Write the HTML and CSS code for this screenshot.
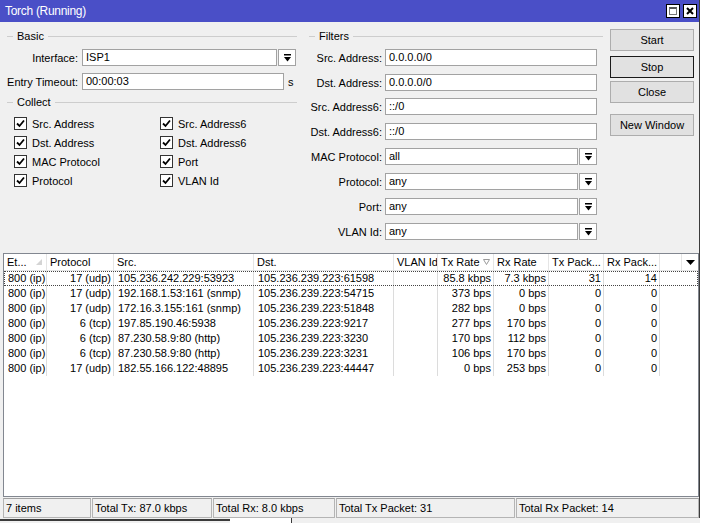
FILE: index.html
```html
<!DOCTYPE html>
<html>
<head>
<meta charset="utf-8">
<title>Torch</title>
<link rel="stylesheet" href="styles.css">
</head>
<body>
<div class="window">
  <div class="titlebar">
    <span class="title">Torch (Running)</span>
    <div class="tbtns">
      <span class="tb"><span class="maxi"></span></span>
      <span class="tb"><svg width="8" height="8" viewBox="0 0 8 8"><path d="M1 1 L7 7 M7 1 L1 7" stroke="#000" stroke-width="2"/></svg></span>
    </div>
  </div>

  <div class="top">
    <div class="col basic">
      <div class="legend"><span class="dash"></span><span class="lt">Basic</span><span class="ln"></span></div>
      <div class="frow first">
        <span class="lbl lw78">Interface:</span>
        <span class="inp w195">ISP1</span>
        <span class="dd"><svg width="7" height="8" viewBox="0 0 7 8"><rect x="0" y="0" width="7" height="1.5" fill="#000"/><polygon points="0,3 7,3 3.5,7.5" fill="#000"/></svg></span>
      </div>
      <div class="frow r2">
        <span class="lbl lw78">Entry Timeout:</span>
        <span class="inp w202">00:00:03</span>
        <span class="unit">s</span>
      </div>
      <div class="legend collect"><span class="dash"></span><span class="lt">Collect</span><span class="ln"></span></div>
      <div class="checks">
        <div class="chk"><span class="box"><svg width="11" height="11" viewBox="0 0 11 11"><polyline points="2,5.5 4.5,8 9,2.5" fill="none" stroke="#000" stroke-width="1.8"/></svg></span><span>Src. Address</span></div>
        <div class="chk"><span class="box"><svg width="11" height="11" viewBox="0 0 11 11"><polyline points="2,5.5 4.5,8 9,2.5" fill="none" stroke="#000" stroke-width="1.8"/></svg></span><span>Src. Address6</span></div>
        <div class="chk"><span class="box"><svg width="11" height="11" viewBox="0 0 11 11"><polyline points="2,5.5 4.5,8 9,2.5" fill="none" stroke="#000" stroke-width="1.8"/></svg></span><span>Dst. Address</span></div>
        <div class="chk"><span class="box"><svg width="11" height="11" viewBox="0 0 11 11"><polyline points="2,5.5 4.5,8 9,2.5" fill="none" stroke="#000" stroke-width="1.8"/></svg></span><span>Dst. Address6</span></div>
        <div class="chk"><span class="box"><svg width="11" height="11" viewBox="0 0 11 11"><polyline points="2,5.5 4.5,8 9,2.5" fill="none" stroke="#000" stroke-width="1.8"/></svg></span><span>MAC Protocol</span></div>
        <div class="chk"><span class="box"><svg width="11" height="11" viewBox="0 0 11 11"><polyline points="2,5.5 4.5,8 9,2.5" fill="none" stroke="#000" stroke-width="1.8"/></svg></span><span>Port</span></div>
        <div class="chk"><span class="box"><svg width="11" height="11" viewBox="0 0 11 11"><polyline points="2,5.5 4.5,8 9,2.5" fill="none" stroke="#000" stroke-width="1.8"/></svg></span><span>Protocol</span></div>
        <div class="chk"><span class="box"><svg width="11" height="11" viewBox="0 0 11 11"><polyline points="2,5.5 4.5,8 9,2.5" fill="none" stroke="#000" stroke-width="1.8"/></svg></span><span>VLAN Id</span></div>
      </div>
    </div>

    <div class="col filters">
      <div class="legend"><span class="dash"></span><span class="lt">Filters</span><span class="ln"></span></div>
      <div class="frow first"><span class="lbl lw76">Src. Address:</span><span class="inp w212">0.0.0.0/0</span></div>
      <div class="frow g8"><span class="lbl lw76">Dst. Address:</span><span class="inp w212">0.0.0.0/0</span></div>
      <div class="frow g7"><span class="lbl lw76">Src. Address6:</span><span class="inp w212">::/0</span></div>
      <div class="frow g8"><span class="lbl lw76">Dst. Address6:</span><span class="inp w212">::/0</span></div>
      <div class="frow g8"><span class="lbl lw76">MAC Protocol:</span><span class="inp w193">all</span><span class="dd"><svg width="7" height="8" viewBox="0 0 7 8"><rect x="0" y="0" width="7" height="1.5" fill="#000"/><polygon points="0,3 7,3 3.5,7.5" fill="#000"/></svg></span></div>
      <div class="frow g8"><span class="lbl lw76">Protocol:</span><span class="inp w193">any</span><span class="dd"><svg width="7" height="8" viewBox="0 0 7 8"><rect x="0" y="0" width="7" height="1.5" fill="#000"/><polygon points="0,3 7,3 3.5,7.5" fill="#000"/></svg></span></div>
      <div class="frow g8"><span class="lbl lw76">Port:</span><span class="inp w193">any</span><span class="dd"><svg width="7" height="8" viewBox="0 0 7 8"><rect x="0" y="0" width="7" height="1.5" fill="#000"/><polygon points="0,3 7,3 3.5,7.5" fill="#000"/></svg></span></div>
      <div class="frow g8"><span class="lbl lw76">VLAN Id:</span><span class="inp w193">any</span><span class="dd"><svg width="7" height="8" viewBox="0 0 7 8"><rect x="0" y="0" width="7" height="1.5" fill="#000"/><polygon points="0,3 7,3 3.5,7.5" fill="#000"/></svg></span></div>
    </div>

    <div class="col btns">
      <div class="btn">Start</div>
      <div class="btn stop">Stop</div>
      <div class="btn close">Close</div>
      <div class="btn nw">New Window</div>
    </div>
  </div>

  <div class="list">
    <div class="row head">
      <div class="c hc">Et...<svg class="sorti" width="6" height="6" viewBox="0 0 6 6"><polygon points="0,6 6,6 6,0" fill="#d4d4d4"/></svg></div>
      <div class="c hc">Protocol</div>
      <div class="c hc">Src.</div>
      <div class="c hc">Dst.</div>
      <div class="c hc">VLAN Id</div>
      <div class="c hc">Tx Rate<svg class="sorti2" width="7" height="6" viewBox="0 0 7 6"><polygon points="0.5,0.5 6.5,0.5 3.5,5.5" fill="none" stroke="#9a9a9a" stroke-width="1"/></svg></div>
      <div class="c hc">Rx Rate</div>
      <div class="c hc">Tx Pack...</div>
      <div class="c hc">Rx Pack...</div>
      <div class="c hc sp"></div>
      <div class="c hc last"><svg width="9" height="5" viewBox="0 0 9 5"><polygon points="0,0 9,0 4.5,5" fill="#000"/></svg></div>
    </div>
    <div class="row data focus">
      <div class="c l">800 (ip)</div><div class="c r">17 (udp)</div><div class="c l">105.236.242.229:53923</div><div class="c l">105.236.239.223:61598</div><div class="c"></div><div class="c r">85.8 kbps</div><div class="c r">7.3 kbps</div><div class="c r">31</div><div class="c r">14</div><div class="c end"></div>
    </div>
    <div class="row data">
      <div class="c l">800 (ip)</div><div class="c r">17 (udp)</div><div class="c l">192.168.1.53:161 (snmp)</div><div class="c l">105.236.239.223:54715</div><div class="c"></div><div class="c r">373 bps</div><div class="c r">0 bps</div><div class="c r">0</div><div class="c r">0</div><div class="c end"></div>
    </div>
    <div class="row data">
      <div class="c l">800 (ip)</div><div class="c r">17 (udp)</div><div class="c l">172.16.3.155:161 (snmp)</div><div class="c l">105.236.239.223:51848</div><div class="c"></div><div class="c r">282 bps</div><div class="c r">0 bps</div><div class="c r">0</div><div class="c r">0</div><div class="c end"></div>
    </div>
    <div class="row data">
      <div class="c l">800 (ip)</div><div class="c r">6 (tcp)</div><div class="c l">197.85.190.46:5938</div><div class="c l">105.236.239.223:9217</div><div class="c"></div><div class="c r">277 bps</div><div class="c r">170 bps</div><div class="c r">0</div><div class="c r">0</div><div class="c end"></div>
    </div>
    <div class="row data">
      <div class="c l">800 (ip)</div><div class="c r">6 (tcp)</div><div class="c l">87.230.58.9:80 (http)</div><div class="c l">105.236.239.223:3230</div><div class="c"></div><div class="c r">170 bps</div><div class="c r">112 bps</div><div class="c r">0</div><div class="c r">0</div><div class="c end"></div>
    </div>
    <div class="row data">
      <div class="c l">800 (ip)</div><div class="c r">6 (tcp)</div><div class="c l">87.230.58.9:80 (http)</div><div class="c l">105.236.239.223:3231</div><div class="c"></div><div class="c r">106 bps</div><div class="c r">170 bps</div><div class="c r">0</div><div class="c r">0</div><div class="c end"></div>
    </div>
    <div class="row data">
      <div class="c l">800 (ip)</div><div class="c r">17 (udp)</div><div class="c l">182.55.166.122:48895</div><div class="c l">105.236.239.223:44447</div><div class="c"></div><div class="c r">0 bps</div><div class="c r">253 bps</div><div class="c r">0</div><div class="c r">0</div><div class="c end"></div>
    </div>
  </div>

  <div class="status">
    <div class="seg s1">7 items</div>
    <div class="seg s2">Total Tx: 87.0 kbps</div>
    <div class="seg s3">Total Rx: 8.0 kbps</div>
    <div class="seg s4">Total Tx Packet: 31</div>
    <div class="seg s5">Total Rx Packet: 14</div>
  </div>
</div>
<div class="under"><span class="uline"></span><span class="ubox"></span></div>
</body>
</html>
```

FILE: styles.css
```css
* { box-sizing: border-box; }
html, body { margin: 0; padding: 0; }
body {
  background: #ffffff;
  font-family: "Liberation Sans", Arial, sans-serif;
  font-size: 11px;
  color: #000;
  width: 704px;
  height: 523px;
  overflow: hidden;
}
.window {
  width: 700px;
  background: #f0f0f0;
  border-right: 1px solid #3c3c3c;
}
.titlebar {
  height: 22px;
  background: #4a4fc7;
  display: flex;
  align-items: center;
  justify-content: space-between;
}
.title {
  color: #fff;
  font-size: 12px;
  padding-left: 5px;
  letter-spacing: -0.3px;
}
.tbtns { display: flex; gap: 3px; margin-right: 2px; }
.tb {
  width: 14px; height: 14px;
  background: #fff;
  border: 1px solid #000;
  display: flex; align-items: center; justify-content: center;
}
.maxi {
  width: 8px; height: 8px;
  border: 1px solid #777;
  border-top: 2px solid #555;
}

.top { display: flex; height: 231px; }
.col { padding-top: 8px; }
.basic { width: 297px; }
.filters { width: 297px; margin-left: 9px; }
.btns { width: 84px; margin-left: 7px; padding-top: 7px; }

.legend { display: flex; align-items: center; height: 13px; }
.basic .legend { padding-left: 7px; }
.filters .legend { padding-left: 3px; }
.dash { width: 6px; height: 1px; background: #cdcdcd; }
.lt { padding: 0 4px 0 4px; line-height: 13px; }
.ln { flex: 1; height: 1px; background: #cdcdcd; }
.collect { margin-top: 6px; }

.frow { display: flex; align-items: center; height: 17px; }
.frow.first { margin-top: 6px; }
.frow.r2 { margin-top: 7px; }
.frow.g8 { margin-top: 8px; }
.frow.g7 { margin-top: 7px; }
.lbl { text-align: right; white-space: nowrap; }
.lw78 { width: 78px; margin-right: 4px; }
.lw76 { width: 76px; margin-right: 3px; }
.inp {
  height: 17px;
  background: #fff;
  border: 1px solid #a2a2a2;
  padding-left: 3px;
  line-height: 15px;
  white-space: nowrap;
}
.w195 { width: 195px; }
.w202 { width: 202px; }
.w212 { width: 212px; }
.w193 { width: 193px; }
.dd {
  width: 18px; height: 17px;
  margin-left: 1px;
  background: #fff;
  border: 1px solid #a2a2a2;
  display: flex; align-items: center; justify-content: center;
}
.unit { margin-left: 4px; }

.checks {
  display: grid;
  grid-template-columns: 146px 1fr;
  padding-left: 14px;
  margin-top: 5px;
}
.chk { display: flex; align-items: center; height: 19px; }
.box {
  width: 13px; height: 13px;
  border: 1px solid #333;
  background: #fff;
  margin-right: 5px;
  display: flex; align-items: center; justify-content: center;
}

.btn {
  height: 22px;
  border: 1px solid #adadad;
  background: #e1e1e1;
  text-align: center;
  line-height: 20px;
}
.btn.stop { margin-top: 5px; border-color: #1a1a1a; }
.btn.close { margin-top: 3px; }
.btn.nw { margin-top: 11px; }

.list {
  margin-left: 3px;
  width: 696px;
  height: 244px;
  border: 1px solid #828790;
  background: #fff;
}
.row {
  display: grid;
  grid-template-columns: 43px 67px 140px 140px 44px 56px 55px 55px 56px 1fr;
}
.row.head {
  grid-template-columns: 43px 67px 140px 140px 44px 56px 55px 55px 56px 22px 1fr;
  height: 17px;
  border-bottom: 1px solid #e5e5e5;
}
.c {
  border-right: 1px solid #dcdcdc;
  white-space: nowrap;
  overflow: hidden;
}
.hc {
  display: flex;
  align-items: center;
  padding-left: 3px;
  border-right-color: #e5e5e5;
  line-height: 16px;
}
.hc.last { border-right: none; justify-content: center; padding-left: 0; }
.sorti { margin-left: auto; margin-right: 4px; }
.sorti2 { margin-left: auto; margin-right: 3px; }
.row.data { height: 15px; line-height: 15px; }
.c.l { padding-left: 4px; text-align: left; }
.c.r { padding-right: 2px; text-align: right; }
.c.end { border-right: none; }
.row.focus { outline: 1px dotted #444; outline-offset: -1px; }

.status {
  display: flex;
  gap: 1px;
  margin-top: 1px;
  padding-left: 3px;
  height: 20px;
}
.seg {
  height: 20px;
  border: 1px solid #b4b4b4;
  border-top-color: #a0a0a0;
  padding-left: 2px;
  line-height: 18px;
  white-space: nowrap;
}
.s1 { width: 88px; }
.s2 { width: 120px; }
.s3 { width: 122px; }
.s4 { width: 179px; }
.s5 { width: 183px; }

.under {
  height: 5px;
  display: flex;
  align-items: flex-start;
  background: #f0f0f0;
  width: 700px;
}
.uline { width: 230px; height: 2px; background: #3a3a3a; margin-top: 1px; }
.ubox { width: 62px; height: 5px; background: #fff; border-right: 1px solid #3a3a3a; }
```
